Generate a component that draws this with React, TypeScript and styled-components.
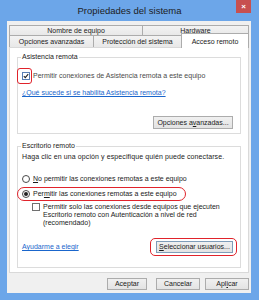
import React from 'react';
import styled, { createGlobalStyle } from 'styled-components';

const Global = createGlobalStyle`
  html, body { margin: 0; padding: 0; background: #ffffff; }
  body { font-family: "Liberation Sans", Arial, sans-serif; }
  * { box-sizing: border-box; }
`;

const FONT = '7px';
const RED = '#e0232b';

const Frame = styled.div`
  width: 259px;
  height: 300px;
  background: #6ca6e9;
  display: flex;
  flex-direction: column;
`;

const TitleBar = styled.div`
  height: 21px;
  flex: none;
  display: grid;
  grid-template-columns: 1fr auto 1fr;
  align-items: start;
`;

const Title = styled.div`
  grid-column: 2;
  font-size: 9.5px;
  line-height: 21px;
  color: #1d1d1d;
  white-space: nowrap;
`;

const CloseBtn = styled.div`
  grid-column: 3;
  justify-self: end;
  margin-right: 8px;
  width: 15px;
  height: 13px;
  background: #c75050;
  color: #ffffff;
  font-size: 8px;
  font-weight: bold;
  display: flex;
  align-items: center;
  justify-content: center;
`;

const Client = styled.div`
  flex: 1;
  margin: 0 8px 7px 7px;
  background: #f0f0f0;
  padding: 4px 2px 3px 2px;
  display: flex;
  flex-direction: column;
  font-size: ${FONT};
  color: #1a1a1a;
`;

const TabRow = styled.div<{ $h: number }>`
  display: flex;
  align-items: flex-end;
  height: ${p => p.$h}px;
  flex: none;
`;

const Tab = styled.div<{ $w: number; $first?: boolean; $active?: boolean }>`
  width: ${p => p.$w}px;
  height: ${p => (p.$active ? '15px' : '100%')};
  flex: none;
  display: flex;
  align-items: center;
  justify-content: center;
  border: 1px solid #acacac;
  border-bottom: none;
  border-left: ${p => (p.$first ? '1px solid #acacac' : 'none')};
  background: ${p => (p.$active ? '#ffffff' : 'linear-gradient(#f3f3f3, #e8e8e8)')};
  white-space: nowrap;
  position: relative;
  z-index: ${p => (p.$active ? 2 : 0)};
  margin-bottom: ${p => (p.$active ? '-1px' : '0')};
  ${p => (p.$active ? 'border-left: 1px solid #acacac; margin-left: -1px;' : '')}
`;

const Panel = styled.div`
  width: 240px;
  height: 226px;
  flex: none;
  border: 1px solid #d9d9d9;
  background: #ffffff;
  padding: 5px 7px 0;
  display: flex;
  flex-direction: column;
`;

const Group = styled.fieldset<{ $mt: number; $pb: number }>`
  margin: ${p => p.$mt}px 0 0;
  border: 1px solid #dcdcdc;
  padding: 0 7px ${p => p.$pb}px 4px;
  min-width: 0;
  display: flex;
  flex-direction: column;
`;

const Legend = styled.legend`
  padding: 0 1px;
  margin-left: -1px;
  font-size: ${FONT};
  line-height: 8px;
  color: #1a1a1a;
`;

const Line = styled.div<{ $mt: number }>`
  margin-top: ${p => p.$mt}px;
  line-height: 8px;
  height: 8px;
  white-space: nowrap;
  letter-spacing: 0.1px;
`;

const OptionRow = styled.div<{ $mt: number; $indent?: number }>`
  margin-top: ${p => p.$mt}px;
  margin-left: ${p => p.$indent || 0}px;
  display: flex;
  align-items: flex-start;
  gap: 3px;
  line-height: 8px;
  white-space: nowrap;
`;

const Highlight = styled.span<{ $inset: string; $radius: number }>`
  position: relative;
  display: inline-flex;
  align-items: center;
  gap: 3px;
  &::after {
    content: '';
    position: absolute;
    inset: ${p => p.$inset};
    border: 1.5px solid ${RED};
    border-radius: ${p => p.$radius}px;
    pointer-events: none;
  }
`;

const Box = styled.span<{ $border: string }>`
  width: 8px;
  height: 8px;
  flex: none;
  border: 1px solid ${p => p.$border};
  background: #ffffff;
  display: inline-flex;
  align-items: center;
  justify-content: center;
`;

const Radio = styled.span<{ $on?: boolean }>`
  width: 8px;
  height: 8px;
  flex: none;
  border-radius: 50%;
  border: 1px solid #4a4a4a;
  background: #ffffff;
  display: inline-flex;
  align-items: center;
  justify-content: center;
  &::after {
    content: '';
    width: 4px;
    height: 4px;
    border-radius: 50%;
    background: ${p => (p.$on ? '#222' : 'transparent')};
  }
`;

const MutedLabel = styled.span`
  color: #4a4a4a;
`;

const Link = styled.a`
  color: #1a66cc;
  text-decoration: underline;
  line-height: 8px;
  cursor: pointer;
`;

const LinkLine = styled.div<{ $mt: number }>`
  margin-top: ${p => p.$mt}px;
  height: 8px;
  line-height: 8px;
  white-space: nowrap;
`;

const ButtonRow = styled.div<{ $mt: number; $justify: string }>`
  margin-top: ${p => p.$mt}px;
  display: flex;
  align-items: center;
  justify-content: ${p => p.$justify};
`;

const Button = styled.button<{ $w: number; $h: number; $ml?: number; $border?: string }>`
  width: ${p => p.$w}px;
  height: ${p => p.$h}px;
  margin-left: ${p => p.$ml || 0}px;
  padding: 0;
  font-family: "Liberation Sans", Arial, sans-serif;
  font-size: ${FONT};
  line-height: 8px;
  color: #1a1a1a;
  border: 1px solid ${p => p.$border || '#acacac'};
  background: linear-gradient(#f0f0f0, #e3e3e3);
  white-space: nowrap;
`;

const MultiLine = styled.div`
  line-height: 8px;
  white-space: nowrap;
`;

const Check = () => (
  <svg width="6" height="6" viewBox="0 0 6 6">
    <polyline points="0.8,3.1 2.3,4.6 5.2,1.2" fill="none" stroke="#222" strokeWidth="1.1" />
  </svg>
);

export default function App() {
  return (
    <>
      <Global />
      <Frame>
        <TitleBar>
          <Title>Propiedades del sistema</Title>
          <CloseBtn>×</CloseBtn>
        </TitleBar>
        <Client>
          <TabRow $h={10}>
            <Tab $w={134} $first>Nombre de equipo</Tab>
            <Tab $w={106}>Hardware</Tab>
          </TabRow>
          <TabRow $h={12}>
            <Tab $w={85} $first>Opciones avanzadas</Tab>
            <Tab $w={88}>Protección del sistema</Tab>
            <Tab $w={68} $active>Acceso remoto</Tab>
          </TabRow>
          <Panel>
            <Group $mt={0} $pb={4}>
              <Legend>Asistencia remota</Legend>
              <OptionRow $mt={11}>
                <Highlight $inset="-4px -2px -4px -5px" $radius={3}>
                  <Box $border="#5a7fb3"><Check /></Box>
                </Highlight>
                <MutedLabel>Permitir conexiones de Asistencia remota a este equipo</MutedLabel>
              </OptionRow>
              <LinkLine $mt={9}>
                <Link>¿Qué sucede si se habilita Asistencia remota?</Link>
              </LinkLine>
              <ButtonRow $mt={19} $justify="flex-end">
                <Button $w={80} $h={13}>Opciones a<u>v</u>anzadas...</Button>
              </ButtonRow>
            </Group>
            <Group $mt={8} $pb={14}>
              <Legend>Escritorio remoto</Legend>
              <Line $mt={3}>Haga clic en una opción y especifique quién puede conectarse.</Line>
              <OptionRow $mt={14}>
                <Radio />
                <span><u>N</u>o permitir las conexiones remotas a este equipo</span>
              </OptionRow>
              <OptionRow $mt={7}>
                <Highlight $inset="-3px -9px -3px -5px" $radius={7}>
                  <Radio $on />
                  <span>Per<u>m</u>itir las conexiones remotas a este equipo</span>
                </Highlight>
              </OptionRow>
              <OptionRow $mt={5} $indent={10}>
                <Box $border="#707070" />
                <MultiLine>
                  Permitir solo las conexiones desde equipos que ejecuten<br />
                  Escritorio remoto con Autenticación a nivel de red<br />
                  (recomendado)
                </MultiLine>
              </OptionRow>
              <ButtonRow $mt={14} $justify="space-between">
                <Link>Ayudarme a elegir</Link>
                <Highlight $inset="-3px -4px -3px -6px" $radius={5}>
                  <Button $w={77} $h={12} $border="#7f9db9"><u>S</u>eleccionar usuarios...</Button>
                </Highlight>
              </ButtonRow>
            </Group>
          </Panel>
          <ButtonRow $mt={5} $justify="flex-end">
            <Button $w={40} $h={12}>Aceptar</Button>
            <Button $w={44} $h={12} $ml={9}>Cancelar</Button>
            <Button $w={44} $h={12} $ml={5}>Apl<u>i</u>car</Button>
          </ButtonRow>
        </Client>
      </Frame>
    </>
  );
}
